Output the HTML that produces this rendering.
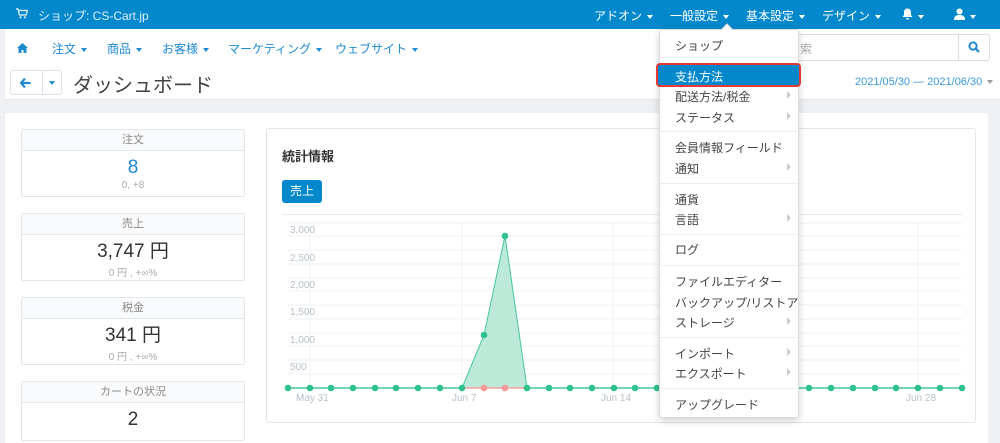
<!DOCTYPE html>
<html><head><meta charset="utf-8"><style>
*{box-sizing:border-box;margin:0;padding:0}
body{width:1000px;height:431px;overflow:hidden;background:#eef0f3;font-family:"Liberation Sans","Noto Sans CJK JP",sans-serif;position:relative;font-size:12px;color:#333}
.a{position:absolute;white-space:nowrap}
.top{left:0;top:0;width:1000px;height:29px;background:#0388cc;color:#fff}
.nav{left:5px;top:29px;width:995px;height:37px;background:#fff}
.tb{left:5px;top:66px;width:995px;height:34px;background:#fff;border-bottom:1px solid #e3e6ea}
.blue{color:#1e8bd0}
.main{left:5px;top:113px;width:983px;height:330px;background:#fff}
.card{left:21px;width:224px;border:1px solid #e3e6ea;border-radius:2px;background:#fff}
.card .h{height:21px;background:#f9fafb;border-bottom:1px solid #e3e6ea;text-align:center;line-height:20px;color:#888;font-size:11px}
.card .v{text-align:center;font-size:19px;line-height:24px;margin-top:5px}
.card .s{text-align:center;font-size:10px;color:#aaa}
.menu{left:659px;top:29px;width:140px;height:389px;background:#fff;border:1px solid #ddd;border-radius:3px;box-shadow:0 3px 8px rgba(0,0,0,.18)}
.mi{left:675px;font-size:12px;color:#444}
.sep{left:660px;width:138px;height:1px;background:#eee}
.arr{left:787px;width:0;height:0;border-left:4px solid #ccc;border-top:4px solid transparent;border-bottom:4px solid transparent}
.car{display:inline-block;width:0;height:0;border-left:3.5px solid transparent;border-right:3.5px solid transparent;border-top:4px solid currentColor;vertical-align:middle;margin-left:5px}
</style></head><body>
<div class="a top"></div>
<div class="a" style="left:16px;top:8px"><svg width="12" height="11" viewBox="0 0 12 11"><path d="M0 1H2L3.5 7H10L11.5 2.5H3" stroke="#cfe6f5" stroke-width="1.4" fill="none"/><circle cx="4.5" cy="9.3" r="1.1" fill="#cfe6f5"/><circle cx="9" cy="9.3" r="1.1" fill="#cfe6f5"/></svg></div>
<div class="a" style="left:38px;top:7px;color:#e0eef8;font-size:12px">ショップ: CS-Cart.jp</div>
<div class="a" style="left:594px;top:7px;color:#fff">アドオン<span class="car"></span></div>
<div class="a" style="left:670px;top:7px;color:#fff">一般設定<span class="car"></span></div>
<div class="a" style="left:746px;top:7px;color:#fff">基本設定<span class="car"></span></div>
<div class="a" style="left:822px;top:7px;color:#fff">デザイン<span class="car"></span></div>
<div class="a" style="left:902px;top:8px;color:#fff">
<svg width="11" height="12" viewBox="0 0 11 12"><path d="M5.5 0.5C3 0.5 2 2.5 2 4.5V7L0.5 9H10.5L9 7V4.5C9 2.5 8 0.5 5.5 0.5Z M4 10H7A1.5 1.5 0 0 1 4 10Z" fill="#fff"/></svg><span class="car"></span></div>
<div class="a" style="left:954px;top:8px;color:#fff"><svg width="11" height="12" viewBox="0 0 11 12"><circle cx="5.5" cy="3.5" r="3" fill="#fff"/><path d="M0 12C0 8 2.5 7 5.5 7S11 8 11 12Z" fill="#fff"/></svg><span class="car"></span></div>

<div class="a nav"></div>
<div class="a blue" style="left:17px;top:42px"><svg width="11" height="10" viewBox="0 0 11 10"><path d="M5.5 0L0 5H1.5V10H4.5V7H6.5V10H9.5V5H11Z" fill="#1e8bd0"/></svg></div>
<div class="a blue" style="left:52px;top:40px">注文<span class="car"></span></div>
<div class="a blue" style="left:107px;top:40px">商品<span class="car"></span></div>
<div class="a blue" style="left:162px;top:40px">お客様<span class="car"></span></div>
<div class="a blue" style="left:228px;top:40px">マーケティング<span class="car"></span></div>
<div class="a blue" style="left:335px;top:40px">ウェブサイト<span class="car"></span></div>
<div class="a" style="left:780px;top:34px;width:210px;height:27px;border:1px solid #ddd;border-radius:3px;background:#fff"></div>
<div class="a" style="left:958px;top:34px;width:1px;height:27px;background:#ddd"></div>
<div class="a" style="left:800px;top:40px;color:#aaa">索</div>
<div class="a" style="left:968px;top:41px"><svg width="12" height="12" viewBox="0 0 12 12"><circle cx="5" cy="5" r="3.6" stroke="#1e8bd0" stroke-width="2" fill="none"/><path d="M7.5 7.5L11 11" stroke="#1e8bd0" stroke-width="2.2"/></svg></div>

<div class="a tb"></div>
<div class="a" style="left:10px;top:70px;width:52px;height:25px;border:1px solid #dde3ea;border-radius:3px;background:#fff"></div>
<div class="a" style="left:42px;top:70px;width:1px;height:25px;background:#dde3ea"></div>
<div class="a" style="left:20px;top:77px"><svg width="11" height="10" viewBox="0 0 11 10"><path d="M5 0.5L1 5L5 9.5M1.5 5H10.5" stroke="#1e8bd0" stroke-width="2.2" fill="none"/></svg></div>
<div class="a blue" style="left:44px;top:75px"><span class="car"></span></div>
<div class="a" style="left:73px;top:69px;font-size:20px;color:#444">ダッシュボード</div>
<div class="a" style="left:855px;top:76px;font-size:11px;color:#3a9ad9">2021/05/30 — 2021/06/30<span class="car" style="color:#999"></span></div>

<div class="a main"></div>
<div class="a card" style="top:129px;height:68px"><div class="h">注文</div><div class="v" style="color:#1e8bd0">8</div><div class="s">0, +8</div></div>
<div class="a card" style="top:213px;height:68px"><div class="h">売上</div><div class="v">3,747 円</div><div class="s">0 円 , +∞%</div></div>
<div class="a card" style="top:297px;height:68px"><div class="h">税金</div><div class="v">341 円</div><div class="s">0 円 , +∞%</div></div>
<div class="a card" style="top:381px;height:60px"><div class="h">カートの状況</div><div class="v">2</div></div>

<div class="a" style="left:266px;top:128px;width:710px;height:295px;border:1px solid #e3e6ea;border-radius:3px;background:#fff"></div>
<div class="a" style="left:282px;top:146px;font-size:13px;font-weight:bold;color:#333">統計情報</div>
<div class="a" style="left:282px;top:180px;width:40px;height:23px;background:#0388cc;border-radius:3px;color:#fff;text-align:center;line-height:23px;font-size:12px">売上</div>
<div class="a" style="left:282px;top:214px;width:680px;height:1px;background:#e5eaf0"></div>
<svg class="a" style="left:266px;top:215px" width="710" height="200" viewBox="266 215 710 200">
<g stroke="#eef1f5" stroke-width="1">
<line x1="288" y1="223" x2="962" y2="223"/><line x1="288" y1="236" x2="962" y2="236"/><line x1="288" y1="250" x2="962" y2="250"/><line x1="288" y1="264" x2="962" y2="264"/><line x1="288" y1="278" x2="962" y2="278"/><line x1="288" y1="291" x2="962" y2="291"/><line x1="288" y1="305" x2="962" y2="305"/><line x1="288" y1="319" x2="962" y2="319"/><line x1="288" y1="333" x2="962" y2="333"/><line x1="288" y1="346" x2="962" y2="346"/><line x1="288" y1="360" x2="962" y2="360"/><line x1="288" y1="374" x2="962" y2="374"/>
<line x1="310" y1="223" x2="310" y2="388"/><line x1="462" y1="223" x2="462" y2="388"/><line x1="613" y1="223" x2="613" y2="388"/><line x1="918" y1="223" x2="918" y2="388"/>
</g>
<g font-size="10" fill="#b8c0cc" font-family="Liberation Sans,sans-serif">
<text x="290" y="233">3,000</text><text x="290" y="261">2,500</text><text x="290" y="288">2,000</text><text x="290" y="315">1,500</text><text x="290" y="343">1,000</text><text x="290" y="370">500</text>
<text x="296" y="401">May 31</text><text x="452" y="401">Jun 7</text><text x="601" y="401">Jun 14</text><text x="906" y="401">Jun 28</text>
</g>
<polygon points="462,388 484,335 505,236 527,388" fill="#bde9d9" stroke="#46c79a" stroke-width="1"/>
<line x1="462" y1="388" x2="527" y2="388" stroke="#f6a0a0" stroke-width="1.5"/>
<line x1="288" y1="388" x2="462" y2="388" stroke="#46c79a" stroke-width="1.5"/>
<line x1="527" y1="388" x2="962" y2="388" stroke="#46c79a" stroke-width="1.5"/>
<g fill="#2fc28f">
<circle cx="288" cy="388" r="3.3"/><circle cx="310" cy="388" r="3.3"/><circle cx="331" cy="388" r="3.3"/><circle cx="353" cy="388" r="3.3"/><circle cx="375" cy="388" r="3.3"/><circle cx="396" cy="388" r="3.3"/><circle cx="418" cy="388" r="3.3"/><circle cx="440" cy="388" r="3.3"/><circle cx="462" cy="388" r="3.3"/><circle cx="484" cy="335" r="3.3"/><circle cx="505" cy="236" r="3.3"/><circle cx="527" cy="388" r="3.3"/><circle cx="549" cy="388" r="3.3"/><circle cx="570" cy="388" r="3.3"/><circle cx="592" cy="388" r="3.3"/><circle cx="614" cy="388" r="3.3"/><circle cx="635" cy="388" r="3.3"/><circle cx="657" cy="388" r="3.3"/>
<circle cx="809" cy="388" r="3.3"/><circle cx="831" cy="388" r="3.3"/><circle cx="853" cy="388" r="3.3"/><circle cx="875" cy="388" r="3.3"/><circle cx="896" cy="388" r="3.3"/><circle cx="918" cy="388" r="3.3"/><circle cx="940" cy="388" r="3.3"/><circle cx="962" cy="388" r="3.3"/>
</g>
<circle cx="484" cy="388" r="3.3" fill="#f79a9a"/><circle cx="505" cy="388" r="3.3" fill="#f79a9a"/>
</svg>

<div class="a menu"></div>
<div class="a" style="left:723px;top:25px;width:8px;height:8px;background:#fff;transform:rotate(45deg);border-left:1px solid #ddd;border-top:1px solid #ddd"></div>
<div class="a mi" style="top:37px">ショップ</div>
<div class="a sep" style="top:57px"></div>
<div class="a" style="left:656px;top:63px;width:145px;height:24px;border:2px solid #e53935;border-radius:4px;background:#0388cc"></div>
<div class="a mi" style="top:68px;color:#fff">支払方法</div>
<div class="a mi" style="top:88px">配送方法/税金</div><div class="a arr" style="top:91px"></div>
<div class="a mi" style="top:109px">ステータス</div><div class="a arr" style="top:112px"></div>
<div class="a sep" style="top:131px"></div>
<div class="a mi" style="top:139px">会員情報フィールド</div>
<div class="a mi" style="top:160px">通知</div><div class="a arr" style="top:163px"></div>
<div class="a sep" style="top:183px"></div>
<div class="a mi" style="top:191px">通貨</div>
<div class="a mi" style="top:211px">言語</div><div class="a arr" style="top:214px"></div>
<div class="a sep" style="top:234px"></div>
<div class="a mi" style="top:241px">ログ</div>
<div class="a sep" style="top:265px"></div>
<div class="a mi" style="top:273px">ファイルエディター</div>
<div class="a mi" style="top:294px">バックアップ/リストア</div>
<div class="a mi" style="top:314px">ストレージ</div><div class="a arr" style="top:317px"></div>
<div class="a sep" style="top:337px"></div>
<div class="a mi" style="top:345px">インポート</div><div class="a arr" style="top:348px"></div>
<div class="a mi" style="top:365px">エクスポート</div><div class="a arr" style="top:368px"></div>
<div class="a sep" style="top:388px"></div>
<div class="a mi" style="top:396px">アップグレード</div>
</body></html>
